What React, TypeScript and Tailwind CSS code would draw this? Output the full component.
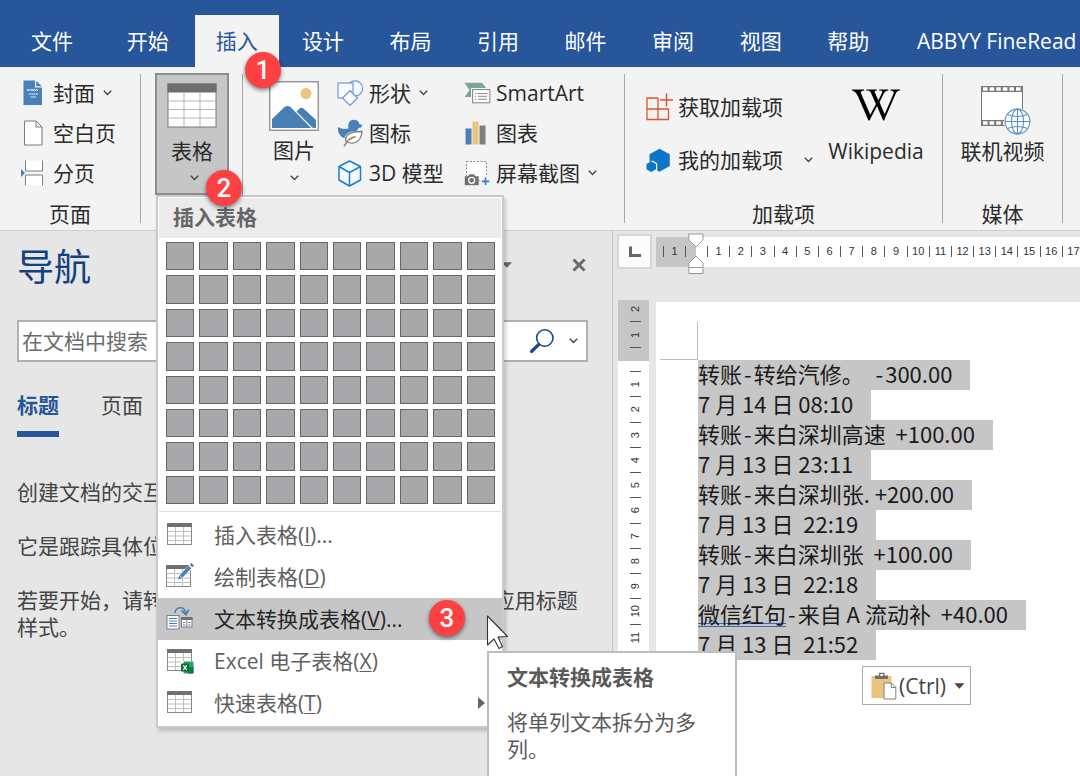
import React from 'react';
import { FaWikipediaW } from 'react-icons/fa';

const UI_FONT = "font-['Open_Sans','Noto_Sans_CJK_SC',sans-serif]";
const DOC_FONT = "font-['Noto_Sans_CJK_SC',sans-serif]";

function Chevron({ className = '' }: { className?: string }) {
  return (
    <svg className={className} width="9" height="6" viewBox="0 0 9 6" fill="none" stroke="#444" strokeWidth="1.4">
      <path d="M0.8 0.8 L4.5 4.4 L8.2 0.8" />
    </svg>
  );
}

function CoverIcon() {
  return (
    <svg width="20" height="26" viewBox="0 0 20 26">
      <path d="M0.5 0.5 H12 V7.5 H19 V25 H0.5 Z" fill="#4a80ba" />
      <path d="M13.2 0.8 L18.8 6.3 H13.2 Z" fill="#4a80ba" />
      <path d="M4 9 l1.2 2 l1.2-2 l1.2 2 l1.2-2 l1.2 2 l1.2-2 l1.2 2 l1.2-2 l1.2 2" fill="none" stroke="#dce8f4" strokeWidth="1" />
      <path d="M5.5 14 H15 M7.5 17 H13" stroke="#dce8f4" strokeWidth="1.2" />
    </svg>
  );
}

function BlankPageIcon() {
  return (
    <svg width="20" height="26" viewBox="0 0 20 26">
      <path d="M1.5 1 H13 L19 7 V25 H1.5 Z" fill="#fff" stroke="#7a7a7a" />
      <path d="M13 1 V7 H19" fill="none" stroke="#7a7a7a" />
    </svg>
  );
}

function PageBreakIcon() {
  return (
    <svg width="24" height="26" viewBox="0 0 24 26">
      <path d="M4.5 0.5 V11 H21.5 V0.5" fill="#fff" stroke="#7f7f7f" />
      <path d="M4.5 25.5 V15 H21.5 V25.5" fill="#fff" stroke="#7f7f7f" />
      <path d="M0 9 L4 13 L0 17 Z" fill="#4a80ba" />
    </svg>
  );
}

function TableIcon() {
  return (
    <svg width="50" height="45" viewBox="0 0 50 45">
      <rect x="1" y="1" width="48" height="43" fill="#fff" stroke="#7a7a7a" />
      <rect x="0.5" y="0.5" width="49" height="9" fill="#6e6e6e" />
      <path d="M1 18 H49 M1 26.5 H49 M1 35 H49 M17 9.5 V44 M33 9.5 V44" stroke="#b5b5b5" />
    </svg>
  );
}

function PictureIcon() {
  return (
    <svg width="50" height="50" viewBox="0 0 50 50">
      <rect x="0.75" y="0.75" width="48.5" height="48.5" fill="#fff" stroke="#8a8a8a" strokeWidth="1.3" />
      <circle cx="37" cy="12.5" r="5.5" fill="#ecc47d" />
      <path d="M3 47 V38 L15.5 26 Q18.5 24 21.5 26 L42 47 Z" fill="#4a7fb4" />
      <path d="M27.5 30.5 L30.5 27.5 Q32.5 26 35 28 L47 39 V47 H43.8 Z" fill="#4a7fb4" />
    </svg>
  );
}

function ShapesIcon() {
  return (
    <svg width="27" height="27" viewBox="0 0 27 27" fill="#f6f9fd" stroke="#6b93cf" strokeWidth="1.1">
      <circle cx="18" cy="8.5" r="7.6" />
      <rect x="1" y="3" width="15" height="15" />
      <path d="M13 10.5 L20.5 18 L13 25.5 L5.5 18 Z" />
    </svg>
  );
}

function DuckIcon() {
  return (
    <svg width="27" height="28" viewBox="0 0 27 28">
      <path
        d="M1 8 C4 10 8 10.5 11.5 9.5 C10.5 4 13 0.8 16.8 0.8 C20 0.8 22 2.8 22.3 5 L25.5 6 C25 8 23.5 8.8 21.8 8.8 C21.2 10 20.5 11 19.5 12 C13 12 8 15 7.5 19 C3 18 0.5 13.5 1 8 Z"
        fill="#4a80ba"
      />
      <path d="M9 22.5 C7 15.5 14 12.5 25 12.5 C24 22.5 17.5 26.5 9 22.5 Z" fill="#fff" stroke="#7f7f7f" strokeWidth="1.3" />
      <path d="M7 27.5 C9.5 22 13 19 18.5 17.5" fill="none" stroke="#7f7f7f" strokeWidth="1.5" />
    </svg>
  );
}

function CubeIcon() {
  return (
    <svg width="26" height="27" viewBox="0 0 26 27" fill="none" stroke="#1e7ccb" strokeWidth="1.5" strokeLinejoin="round">
      <path d="M12.5 1 L23.5 6.5 V20 L12.5 26 L2 20 V6.5 Z" fill="#f4f9fd" />
      <path d="M2 6.5 L12.5 12.5 L23.5 6.5 M12.5 12.5 V26" />
    </svg>
  );
}

function SmartArtIcon() {
  return (
    <svg width="27" height="22" viewBox="0 0 27 22">
      <path d="M0.5 0.8 H18 L23 7 L18 15 H0.5 L5.5 8 Z" fill="#77a798" />
      <rect x="7" y="6" width="20" height="16" fill="#f3f3f3" />
      <rect x="8.6" y="7.6" width="17.2" height="13.2" fill="#fff" stroke="#808080" />
      <path d="M14 11.5 H23 M14 14.3 H23 M14 17.2 H23 M11 11.5 H12.4 M11 14.3 H12.4 M11 17.2 H12.4" stroke="#8a8a8a" />
    </svg>
  );
}

function ChartIcon() {
  return (
    <svg width="22" height="24" viewBox="0 0 22 24">
      <rect x="1.5" y="7.5" width="6" height="16" fill="#4a80ba" />
      <rect x="8.5" y="0.5" width="6" height="23" fill="#ecc47d" />
      <rect x="15.5" y="4.5" width="6" height="19" fill="#808080" />
    </svg>
  );
}

function ScreenshotIcon() {
  return (
    <svg width="27" height="26" viewBox="0 0 27 26">
      <rect x="2.5" y="1.5" width="20" height="19" fill="#fcfcfc" stroke="#8a8a8a" strokeDasharray="2 1.5" />
      <path d="M0.5 16 H4 L5.5 14 H10 L11.5 16 H15 V25.5 H0.5 Z" fill="#6f6f6f" stroke="#f3f3f3" strokeWidth="0.6" />
      <circle cx="7.7" cy="20.3" r="3" fill="none" stroke="#fff" strokeWidth="1.3" />
      <rect x="17" y="16.5" width="9.5" height="9.5" fill="#f3f3f3" />
      <path d="M21.5 17.5 V25 M17.7 21.3 H25.3" stroke="#3d7cc0" strokeWidth="1.7" />
    </svg>
  );
}

function GetAddinsIcon() {
  return (
    <svg width="28" height="28" viewBox="0 0 28 28" fill="none" stroke="#e0532f" strokeWidth="1.3">
      <path d="M12 5 H1 V26.5 H22.5 V16 H1 M12 5 V26.5" />
      <path d="M20.5 0.5 V13.5 M14 7 H27" strokeWidth="1.5" />
    </svg>
  );
}

function MyAddinsIcon() {
  return (
    <svg width="25" height="25" viewBox="0 0 25 25" fill="#0e74c8">
      <path d="M13.5 0.8 L23.8 6.3 V18 L13.5 23.8 L11.2 22.5 V15.3 L6.5 12.6 L3.5 14 V6.3 Z" />
      <path d="M5.2 13.2 L10 15.9 V21.2 L5.2 23.9 L0.5 21.2 V15.9 Z" />
    </svg>
  );
}

function VideoIcon() {
  return (
    <svg width="59" height="50" viewBox="-7 0 59 50">
      <rect x="1.5" y="1.5" width="41" height="39" fill="#fff" stroke="#777" />
      <rect x="1" y="1" width="42" height="6" fill="#777" />
      <rect x="1" y="35" width="42" height="6" fill="#777" />
      <path d="M3 4 H42 M3 38 H42" stroke="#fff" strokeWidth="3.6" strokeDasharray="4.6 2" />
      <circle cx="37.5" cy="36.5" r="13.5" fill="#f3f3f3" />
      <g fill="#fff" stroke="#5b8fc9" strokeWidth="1.1">
        <circle cx="37.5" cy="36.5" r="12.4" />
        <ellipse cx="37.5" cy="36.5" rx="6" ry="12.4" />
        <path d="M37.5 24 V49 M25 36.5 H50 M27.5 29.5 Q37.5 33.5 47.5 29.5 M27.5 43.5 Q37.5 39.5 47.5 43.5" fill="none" />
      </g>
    </svg>
  );
}

function SmallTable({ x }: { x: number }) {
  return (
    <g transform={`translate(${x} 0)`}>
      <rect x="0.5" y="2.5" width="24" height="21" fill="#fff" stroke="#8a8a8a" />
      <rect x="0" y="2" width="25" height="4" fill="#707070" />
      <path d="M1 10.5 H24 M1 15 H24 M1 19.5 H24 M8.5 6 V23 M16.5 6 V23" stroke="#bdbdbd" />
    </g>
  );
}

function InsertTableIcon() {
  return (
    <svg width="28" height="28" viewBox="0 0 28 28">
      <SmallTable x={1} />
    </svg>
  );
}

function DrawTableIcon() {
  return (
    <svg width="28" height="28" viewBox="0 0 28 28">
      <SmallTable x={0} />
      <path d="M12 17 L14 11.5 L24 1 L27.5 4 L17.5 14.5 Z" fill="#fff" />
      <path d="M15 13.5 L24 4" stroke="#4a80ba" strokeWidth="3.6" />
      <path d="M25 3 L26.8 1.2" stroke="#4a80ba" strokeWidth="3.6" />
      <path d="M12 16.6 L13.2 12.6 L16 15.2 Z" fill="#4a80ba" />
    </svg>
  );
}

function ConvertIcon() {
  return (
    <svg width="28" height="28" viewBox="0 0 28 28">
      <rect x="1" y="10.5" width="12" height="13.5" fill="#fff" stroke="#7f7f7f" />
      <path d="M3 13.5 H11 M3 16 H11 M3 18.5 H11 M3 21 H11" stroke="#4a80ba" />
      <rect x="15.5" y="12.5" width="10.5" height="9.5" fill="#fff" stroke="#7f7f7f" />
      <rect x="15" y="12" width="11.5" height="3" fill="#707070" />
      <path d="M20.8 15 V22" stroke="#7f7f7f" />
      <path d="M17 17.5 H19.3 M17 20 H19.3 M22.3 17.5 H24.6 M22.3 20 H24.6" stroke="#4a80ba" />
      <path d="M9 8 C9.5 1.5 18.5 0.5 19.8 8" fill="none" stroke="#4a80ba" strokeWidth="1.6" />
      <path d="M15.5 5.5 L19.9 9.5 L22.8 4.6" fill="none" stroke="#4a80ba" strokeWidth="1.8" />
    </svg>
  );
}

function ExcelTableIcon() {
  return (
    <svg width="28" height="28" viewBox="0 0 28 28">
      <SmallTable x={1} />
      <rect x="15" y="14" width="13" height="13" fill="#fff" />
      <rect x="17.5" y="14.5" width="10" height="12" rx="1" fill="#21a366" />
      <rect x="22" y="20" width="5.5" height="6.5" fill="#107c41" />
      <rect x="15" y="16.5" width="8" height="8" rx="0.8" fill="#0f6b39" />
      <path d="M17.3 18.3 L20.7 22.8 M20.7 18.3 L17.3 22.8" stroke="#fff" strokeWidth="1.2" />
    </svg>
  );
}

function SearchIcon() {
  return (
    <svg width="26" height="26" viewBox="0 0 26 26" fill="none" stroke="#14488f">
      <circle cx="15.8" cy="10" r="8.2" strokeWidth="1.6" />
      <path d="M9.6 16.6 L2.6 23.4" strokeWidth="3.4" strokeLinecap="round" />
    </svg>
  );
}

function PasteIcon() {
  return (
    <svg width="26" height="28" viewBox="0 0 26 28">
      <rect x="0.5" y="4" width="20" height="22" fill="#ecc47d" />
      <path d="M4 7 V3.5 H8 V0.8 H13.5 V3.5 H17 V7 Z" fill="#6f6f6f" />
      <path d="M9.4 2 H12 V4 H9.4 Z" fill="#fff" />
      <path d="M13 11 H20.5 L24.8 15.3 V27 H13 Z" fill="#fff" stroke="#7f7f7f" />
      <path d="M20.3 11 V15.5 H24.8" fill="none" stroke="#7f7f7f" />
    </svg>
  );
}

const tabs = ['开始', '插入', '设计', '布局', '引用', '邮件', '审阅', '视图', '帮助'];

function TabBar() {
  return (
    <nav className="flex h-[67px] items-end overflow-hidden bg-[#27569b] text-white">
      <button className="h-[52px] w-26 shrink-0">文件</button>
      <div className="grid w-[788px] shrink-0 grid-cols-9">
        {tabs.map((t) =>
          t === '插入' ? (
            <button key={t} aria-current="page" className="ml-[3px] h-[52px] bg-[#f3f3f3] text-[#27569b]">
              {t}
            </button>
          ) : (
            <button key={t} className="h-[52px]">
              {t}
            </button>
          ),
        )}
      </div>
      <button className="h-[52px] shrink-0 pl-[25px] whitespace-nowrap">ABBYY FineRead</button>
    </nav>
  );
}

function Separator() {
  return <div className="mt-[7px] h-[149px] w-px shrink-0 bg-[#a8a8a8]" />;
}

function Cmd({ icon, label, chevron }: { icon: React.ReactNode; label: string; chevron?: boolean }) {
  return (
    <button className="flex h-10 items-center whitespace-nowrap">
      <span className="flex w-8 shrink-0 items-center">{icon}</span>
      {label}
      {chevron && <Chevron className="ml-2" />}
    </button>
  );
}

function GroupLabel({ children }: { children?: React.ReactNode }) {
  return <div className="flex h-[42px] items-center justify-center">{children}</div>;
}

function Ribbon() {
  return (
    <section className="flex h-[164px] overflow-hidden border-b border-[#cfcfcf] bg-[#f3f3f3] text-[#2b2b2b]">
      <div className="w-[140px] shrink-0 pt-1.5">
        <div className="pl-[21px]">
          <Cmd icon={<span className="pl-0.5"><CoverIcon /></span>} label="封面" chevron />
          <Cmd icon={<span className="pl-0.5"><BlankPageIcon /></span>} label="空白页" />
          <Cmd icon={<PageBreakIcon />} label="分页" />
        </div>
        <GroupLabel>页面</GroupLabel>
      </div>
      <Separator />
      <div className="w-[101px] shrink-0 pt-1.5 pl-[14px]">
        <button className="flex h-[122px] w-[74px] flex-col items-center border-2 border-[#8c8c8c] bg-[#c6c6c6] pt-2">
          <TableIcon />
          <span className="mt-[7px] leading-8">表格</span>
          <Chevron className="mt-2 ml-1" />
        </button>
      </div>
      <Separator />
      <div className="flex w-[381px] shrink-0 pt-1.5">
        <button className="ml-[26px] flex w-[50px] flex-col items-center pt-2">
          <PictureIcon />
          <span className="mt-[3px] leading-8">图片</span>
          <Chevron className="mt-[9px]" />
        </button>
        <div className="ml-[18px] w-[127px]">
          <Cmd icon={<ShapesIcon />} label="形状" chevron />
          <Cmd icon={<DuckIcon />} label="图标" />
          <Cmd icon={<CubeIcon />} label="3D 模型" />
        </div>
        <div>
          <Cmd icon={<SmartArtIcon />} label="SmartArt" />
          <Cmd icon={<ChartIcon />} label="图表" />
          <Cmd icon={<ScreenshotIcon />} label="屏幕截图" chevron />
        </div>
      </div>
      <Separator />
      <div className="w-[317px] shrink-0 pt-1.5">
        <div className="flex h-[120px]">
          <div className="flex w-[202px] flex-col gap-[13px] pt-[14px] pl-[21px]">
            <Cmd icon={<GetAddinsIcon />} label="获取加载项" />
            <button className="flex h-10 items-center justify-between pr-[14px] whitespace-nowrap">
              <span className="flex items-center">
                <span className="w-8">
                  <MyAddinsIcon />
                </span>
                我的加载项
              </span>
              <Chevron />
            </button>
          </div>
          <button className="flex w-[98px] flex-col items-center pt-3">
            <FaWikipediaW size={48} className="-my-1 text-black" />
            <span className="mt-2 leading-9">Wikipedia</span>
          </button>
        </div>
        <GroupLabel>加载项</GroupLabel>
      </div>
      <Separator />
      <div className="w-[119px] shrink-0 pt-1.5">
        <button className="flex h-[120px] w-full flex-col items-center pt-3">
          <VideoIcon />
          <span className="leading-8">联机视频</span>
        </button>
        <GroupLabel>媒体</GroupLabel>
      </div>
      <Separator />
    </section>
  );
}

function NavPane() {
  return (
    <aside className="w-[613px] shrink-0 border-r border-[#c6c6c6] pt-3 pl-[17px] text-[#444]">
      <div className="flex h-12 items-center justify-between pr-[26px]">
        <h2 className="text-[37px] leading-12 text-[#124180]">导航</h2>
        <div className="flex items-center gap-[59px] pb-1">
          <button aria-label="任务窗格选项">
            <svg width="12" height="6" viewBox="0 0 12 6" fill="#666"><path d="M0.5 0.3 H11 L5.7 5.8 Z" /></svg>
          </button>
          <button aria-label="关闭">
            <svg width="14" height="14" viewBox="0 0 14 14" stroke="#6b6b6b" strokeWidth="3"><path d="M1.5 1.5 L12.5 12.5 M12.5 1.5 L1.5 12.5" /></svg>
          </button>
        </div>
      </div>
      <div className="mt-[29px] mr-6 flex h-[42px] items-center border-2 border-[#b0b0b0] bg-white pr-2">
        <input aria-label="在文档中搜索" placeholder="在文档中搜索" className="h-full min-w-0 flex-1 pl-[3px] outline-none placeholder:text-[#6b6b6b]" />
        <button aria-label="搜索"><SearchIcon /></button>
        <button aria-label="搜索选项" className="ml-[14px]"><Chevron /></button>
      </div>
      <div className="mt-[29px] flex gap-[42px]">
        <button className="h-[46px] border-b-[6px] border-[#27569b] pb-3 leading-7 font-bold text-[#27569b]">标题</button>
        <button className="h-[46px] pb-[18px] leading-7">页面</button>
      </div>
      <div className="mt-[42px] mr-6 flex flex-col gap-[27px] leading-[27px] whitespace-nowrap">
        <p>创建文档的交互式大纲。</p>
        <p>它是跟踪具体位置或快速移动内容的好方式。</p>
        <p>若要开始，请转到“开始”选项卡，并向文档中的标题应用标题<br />样式。</p>
      </div>
    </aside>
  );
}

function HorizontalRuler() {
  return (
    <div className="relative ml-1 flex h-[30px] min-w-0 flex-1 items-center bg-white font-['Liberation_Sans',sans-serif] text-[11px] text-[#333]">
      <div className="flex h-full w-10 shrink-0 items-center bg-[#c6c6c6] pl-[7px]">
        <span className="grid w-[23px] grid-cols-[22px_1px] items-center">
          <span className="border-l border-[#555] text-center leading-[11px]">1</span>
          <span className="h-[11px] bg-[#555]" />
        </span>
      </div>
      <div className="ml-[11px] grid w-[377px] shrink-0 grid-cols-[repeat(17,1fr)]">
        {Array.from({ length: 17 }, (_, i) => (
          <span key={i} className="border-l border-[#555] text-center leading-[11px]">{i + 1}</span>
        ))}
      </div>
      <svg className="absolute -top-1 left-[32px]" width="16" height="42" viewBox="0 0 16 42" fill="#fff" stroke="#999">
        <path d="M0.8 1 H15 V7 L8 14 L0.8 7 Z" />
        <path d="M8 23 L15 30 V40.5 H0.8 V30 Z" />
        <path d="M0.8 34.5 H15" />
      </svg>
    </div>
  );
}

function VerticalRuler() {
  return (
    <div className="w-[31px] shrink-0 self-stretch bg-white font-['Liberation_Sans',sans-serif] text-[11px] leading-[31px] text-[#333]">
      <div className="flex h-[61px] flex-col items-center bg-[#c6c6c6] pt-[3px] pl-[3px]">
        <span className="h-[12px] rotate-180 text-center [writing-mode:vertical-rl]">2</span>
        <span className="mt-1.5 h-px w-[11px] bg-[#555]" />
        <span className="h-[25px] rotate-180 text-center [writing-mode:vertical-rl]">1</span>
        <span className="h-px w-[11px] bg-[#555]" />
      </div>
      <div className="mt-[10px] grid h-[278px] grid-rows-[repeat(11,1fr)] justify-center pl-[3px]">
        {Array.from({ length: 11 }, (_, i) => (
          <span key={i} className="flex flex-col items-center">
            <span className="h-px w-[11px] shrink-0 bg-[#555]" />
            <span className="min-h-0 flex-1 rotate-180 text-center [writing-mode:vertical-rl]">{i + 1}</span>
          </span>
        ))}
      </div>
    </div>
  );
}

function Dash() {
  return <span className="mx-0.5">-</span>;
}

const lines: React.ReactNode[] = [
  <>转账<Dash />转给汽修。{'  '}<Dash />300.00</>,
  '7 月 14 日 08:10',
  <>转账<Dash />来白深圳高速{'  '}+100.00</>,
  '7 月 13 日 23:11',
  <>转账<Dash />来白深圳张. +200.00</>,
  '7 月 13 日  22:19',
  <>转账<Dash />来白深圳张{'  '}+100.00</>,
  '7 月 13 日  22:18',
  <>
    <span className="inline-block h-[27px] border-b-4 border-double border-[#2f6dc0]">微信红句</span>
    <Dash />来自 A 流动补{'  '}+40.00
  </>,
  '7 月 13 日  21:52',
];

function DocumentArea() {
  return (
    <main className="flex min-w-0 flex-1 flex-col overflow-hidden pl-1">
      <div className="flex items-center pt-[3px]">
        <button aria-label="左对齐式制表符" className="flex h-[35px] w-[35px] shrink-0 items-center justify-center border-2 border-[#d6d6d6] bg-[#fcfcfc]">
          <svg width="12" height="12" viewBox="0 0 12 12"><path d="M1.5 0.5 V9.5 H12" fill="none" stroke="#666" strokeWidth="3" /></svg>
        </button>
        <HorizontalRuler />
      </div>
      <div className="mt-[31px] flex min-h-0 flex-1 pl-px">
        <VerticalRuler />
        <div className="mt-0.5 ml-[7px] min-w-0 flex-1 bg-white pt-5">
          <div className="ml-1 h-[38px] w-[38px] border-r border-b border-[#bdbdbd]" />
          <div className={`${DOC_FONT} flex flex-col items-start pl-[42px] text-[22px] text-[#1a1a1a]`}>
            {lines.map((l, i) => (
              <p key={i} className="h-[30px] bg-[#c6c6c6] pr-[18px] leading-[27px] whitespace-pre">
                {l}
              </p>
            ))}
          </div>
        </div>
      </div>
    </main>
  );
}

const menuItems = [
  { icon: <InsertTableIcon />, label: '插入表格', k: 'I', tail: ')...' },
  { icon: <DrawTableIcon />, label: '绘制表格', k: 'D', tail: ')' },
  { icon: <ConvertIcon />, label: '文本转换成表格', k: 'V', tail: ')...', active: true },
  { icon: <ExcelTableIcon />, label: 'Excel 电子表格', k: 'X', tail: ')' },
  { icon: <InsertTableIcon />, label: '快速表格', k: 'T', tail: ')', sub: true },
];

function TableMenu() {
  return (
    <div className="absolute top-[195px] left-[156px] w-[348px] border-2 border-[#c9c9c9] bg-white pb-0.5 text-[#5f5f5f] shadow-[2px_3px_4px_rgba(0,0,0,0.18)]">
      <h3 className="mx-px mt-px h-10 bg-[#ebebeb] pl-[14px] leading-[38px] font-bold text-[#666]">插入表格</h3>
      <div className="mt-1 ml-[8px] grid h-[262px] w-[329px] grid-cols-10 grid-rows-8 gap-[5px]">
        {Array.from({ length: 80 }, (_, i) => (
          <button key={i} aria-label={`${(i % 10) + 1}x${Math.floor(i / 10) + 1} 表格`} className="border border-[#666] bg-[#a8a8aa]" />
        ))}
      </div>
      <hr className="mx-px mt-[7px] mb-0.5 border-[#dedede]" />
      {menuItems.map((m) => (
        <button
          key={m.label}
          className={`flex h-[42px] w-full items-center pl-2 text-left whitespace-nowrap ${m.active ? 'bg-[#c6c6c6] text-[#262626]' : ''}`}
        >
          <span className="w-12 shrink-0">{m.icon}</span>
          <span className="flex-1">
            {m.label}(<span className="underline decoration-1 underline-offset-2">{m.k}</span>
            {m.tail}
          </span>
          {m.sub && (
            <svg className="mr-[17px]" width="7" height="12" viewBox="0 0 7 12" fill="#666"><path d="M0 0 L7 6 L0 12 Z" /></svg>
          )}
        </button>
      ))}
    </div>
  );
}

function Badge({ n, className }: { n: number; className: string }) {
  return (
    <span className={`absolute flex size-9 items-center justify-center rounded-full bg-[#fd4041] font-['Roboto',sans-serif] text-[26px] leading-9 font-medium text-white shadow-[0_2px_4px_rgba(0,0,0,0.5)] ${className}`}>
      {n}
    </span>
  );
}

export default function App() {
  return (
    <div className={`${UI_FONT} relative flex h-screen flex-col overflow-hidden bg-[#e6e6e6] text-[21px] leading-8`} lang="zh-CN">
      <TabBar />
      <Ribbon />
      <div className="flex min-h-0 flex-1">
        <NavPane />
        <DocumentArea />
      </div>

      <button className="absolute top-[666px] left-[862px] flex h-[39px] w-[109px] items-center border border-[#ababab] bg-white pl-2 text-[#444]">
        <PasteIcon />
        <span className="ml-0.5">(Ctrl)</span>
        <svg className="ml-2" width="11" height="6" viewBox="0 0 11 6" fill="#444"><path d="M0.3 0.2 H10.5 L5.4 5.8 Z" /></svg>
      </button>

      <TableMenu />

      <div role="tooltip" className="absolute top-[651px] left-[487px] h-[140px] w-[250px] border-2 border-[#bdbdbd] bg-white pt-2 pr-9 pl-[18px] text-[#5a5a5a]">
        <h4 className="font-bold">文本转换成表格</h4>
        <p className="mt-4 leading-[27px]">将单列文本拆分为多列。</p>
      </div>

      <svg className="absolute top-[614px] left-[486px]" width="24" height="36" viewBox="0 0 24 36">
        <path d="M1.5 2 V31 L8 25 L13 34.5 L16.5 32.5 L12 23 L21.5 22.5 Z" fill="#fff" stroke="#333" strokeWidth="1.1" strokeLinejoin="round" />
      </svg>

      <Badge n={1} className="top-[52px] left-[245px]" />
      <Badge n={2} className="top-[170px] left-[206px]" />
      <Badge n={3} className="top-[600px] left-[429px]" />
    </div>
  );
}
